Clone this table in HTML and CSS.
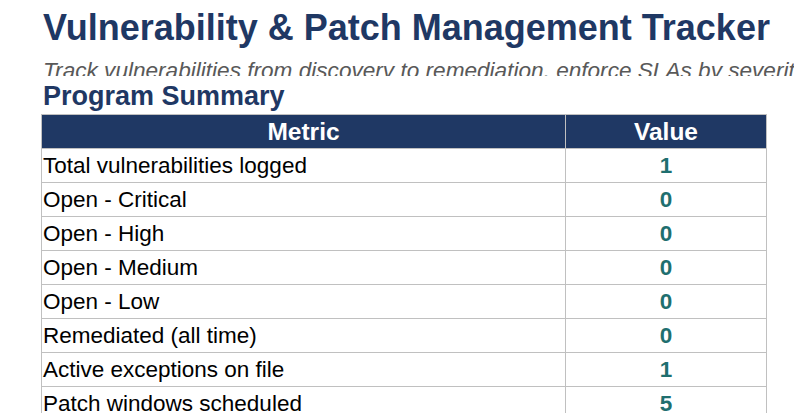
FILE: index.html
```html
<!DOCTYPE html>
<html>
<head>
<meta charset="utf-8">
<link rel="stylesheet" href="styles.css">
</head>
<body>
<div class="sheet">
  <div class="row title-row"><h1 class="title">Vulnerability &amp; Patch Management Tracker</h1></div>
  <div class="row sub-row"><p class="subtitle">Track vulnerabilities from discovery to remediation, enforce SLAs by severity, and document exceptions</p></div>
  <div class="row section-row"><h2 class="section">Program Summary</h2></div>
  <table class="summary">
    <colgroup><col class="c-metric"><col class="c-value"></colgroup>
    <thead>
      <tr><th>Metric</th><th>Value</th></tr>
    </thead>
    <tbody>
      <tr><td>Total vulnerabilities logged</td><td class="val">1</td></tr>
      <tr><td>Open - Critical</td><td class="val">0</td></tr>
      <tr><td>Open - High</td><td class="val">0</td></tr>
      <tr><td>Open - Medium</td><td class="val">0</td></tr>
      <tr><td>Open - Low</td><td class="val">0</td></tr>
      <tr><td>Remediated (all time)</td><td class="val">0</td></tr>
      <tr><td>Active exceptions on file</td><td class="val">1</td></tr>
      <tr><td>Patch windows scheduled</td><td class="val">5</td></tr>
    </tbody>
  </table>
</div>
</body>
</html>
```
FILE: styles.css
```css
html, body {
  margin: 0;
  padding: 0;
  background: #ffffff;
  overflow: hidden;
}
body {
  font-family: "Liberation Sans", Arial, sans-serif;
  color: #000;
}
.sheet {
  padding-left: 41px;
  width: 753px;
}
.row {
  overflow: hidden;
  white-space: nowrap;
}
.title-row {
  height: 52px;
}
.title {
  margin: 0;
  padding: 6px 0 0 2px;
  font-size: 36px;
  line-height: 44px;
  font-weight: bold;
  color: #1f3864;
}
.sub-row {
  height: 24px;
  width: 760px;
}
.subtitle {
  margin: 0;
  padding: 2px 0 0 2px;
  font-size: 22.6px;
  line-height: 34px;
  font-style: italic;
  color: #595959;
}
.section-row {
  height: 38px;
}
.section {
  margin: 0;
  padding: 5px 0 0 2px;
  font-size: 27px;
  line-height: 30px;
  font-weight: bold;
  color: #1f3864;
}
.summary {
  border-collapse: collapse;
  table-layout: fixed;
  width: 725px;
}
.c-metric { width: 524px; }
.c-value { width: 201px; }
.summary th, .summary td {
  border: 1px solid #c0c0c0;
  height: 33px;
  padding: 0 1px;
  font-size: 22.5px;
  line-height: 26px;
  white-space: nowrap;
  overflow: hidden;
}
.summary th {
  background: #1f3864;
  color: #fff;
  font-weight: bold;
  text-align: center;
  font-size: 24.5px;
}
.summary td.val {
  text-align: center;
  font-weight: bold;
  color: #1f6f6f;
}
```
